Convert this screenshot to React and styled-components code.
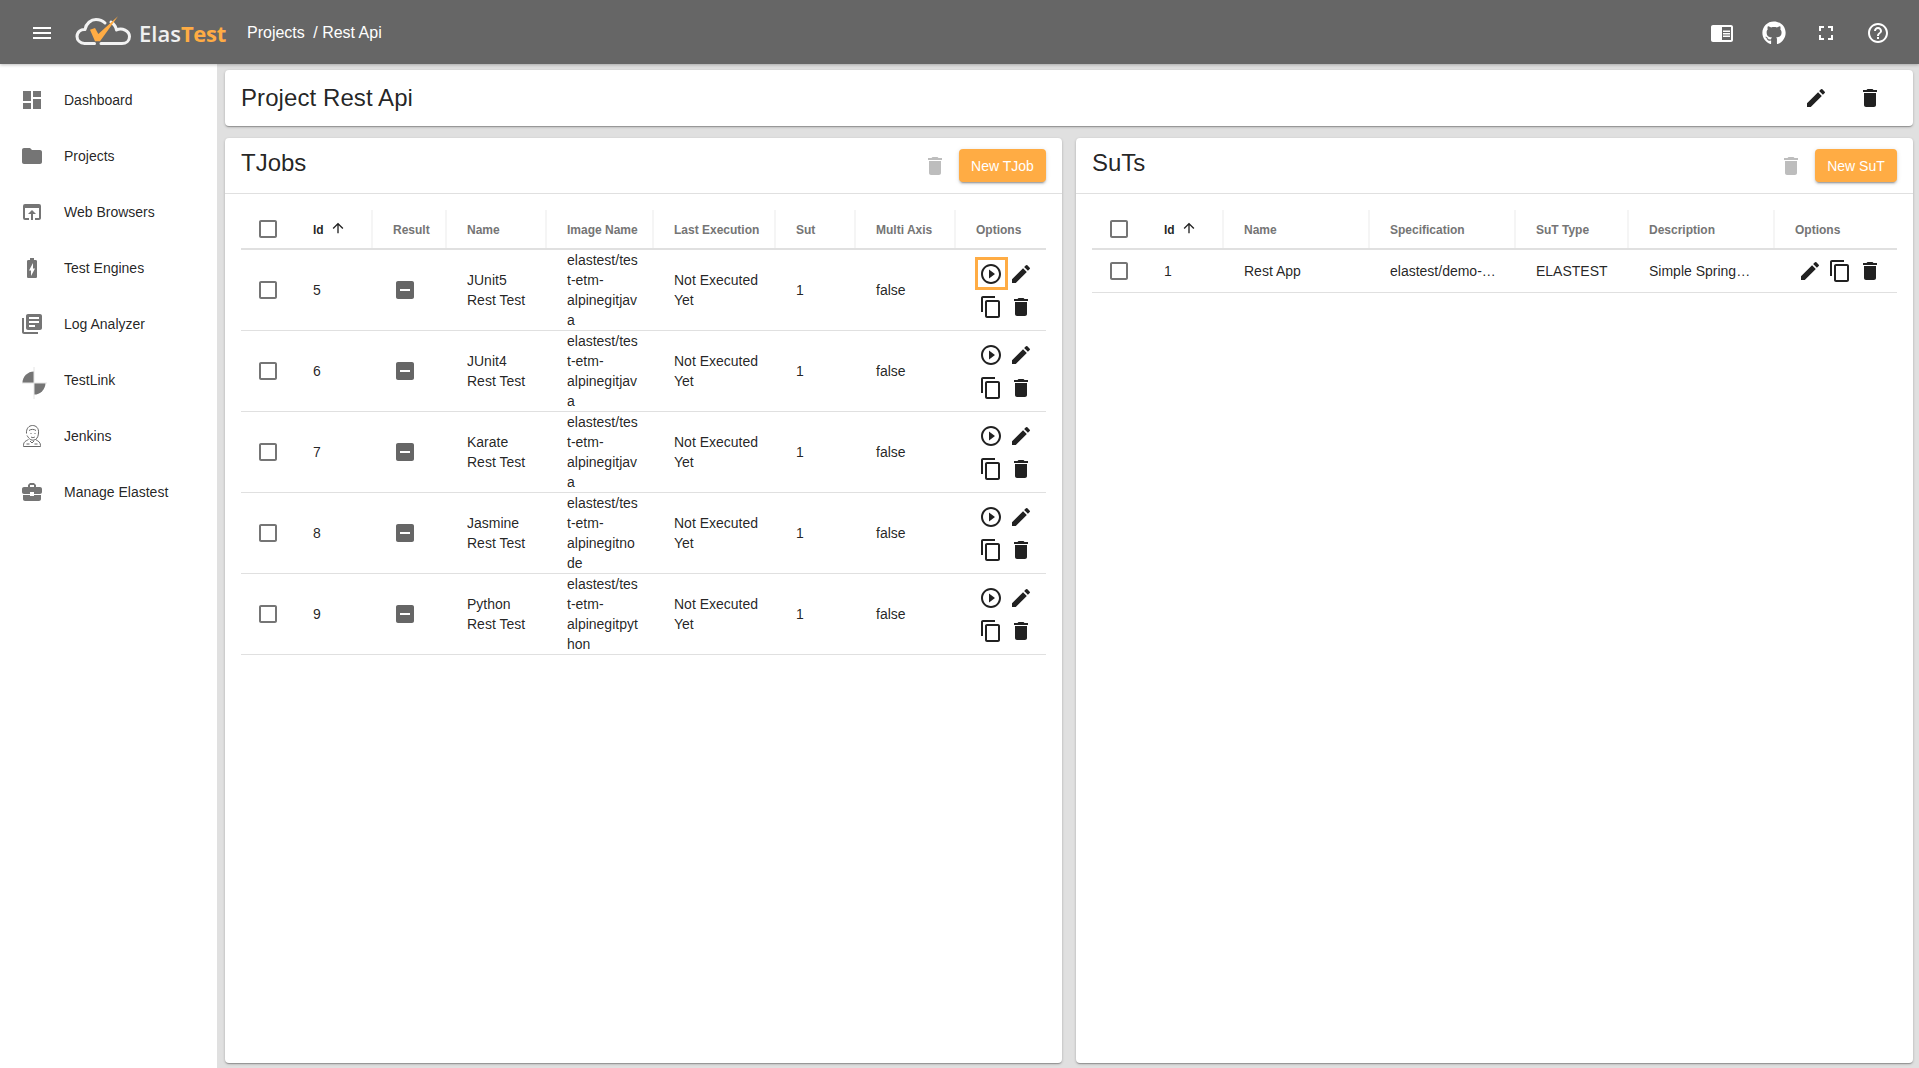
import React from "react";
import styled, { createGlobalStyle } from "styled-components";
import {
  MdMenu, MdChromeReaderMode, MdFullscreen, MdHelpOutline, MdDashboard, MdFolder, MdOpenInBrowser,
  MdBatteryChargingFull, MdLibraryBooks, MdBusinessCenter, MdEdit, MdDelete, MdContentCopy,
  MdPlayCircleOutline, MdIndeterminateCheckBox, MdCheckBoxOutlineBlank, MdArrowUpward,
} from "react-icons/md";
import { FaGithub } from "react-icons/fa";

const Global = createGlobalStyle`
  html, body { margin: 0; padding: 0; height: 100%; overflow: hidden; }
  body { font-family: "Liberation Sans", Arial, sans-serif; color: rgba(0,0,0,.87); background: #e0e0e0; }
  #root { height: 100%; }
  * { box-sizing: border-box; }
`;

const Page = styled.div`
  display: flex; flex-direction: column; height: 1068px; width: 1919px;
`;
const TopBar = styled.header`
  flex: none; height: 64px; background: #666; display: flex; align-items: center;
  padding: 0 15px 0 30px; color: #fff; position: relative; z-index: 2;
  box-shadow: 0 1px 3px rgba(0,0,0,.25);
`;
const MenuIcon = styled(MdMenu)`
  font-size: 24px; margin-right: 21px; flex: none; margin-top: 2px;
`;
const LogoMark = styled.svg`
  width: 57px; height: 36px; flex: none; margin-right: 7px;
`;
const LogoText = styled.span`
  font-family: "Open Sans", sans-serif; font-weight: 600; font-size: 22px;
  color: #f0f0f0; width: 108px; flex: none; margin-top: 1px;
`;
const LogoAccent = styled.span` color: #ffac44; font-weight: 700; letter-spacing: -.3px; `;
const Crumb = styled.span`
  font-size: 16px; margin-right: 4px; margin-top: 1px;
`;
const Spacer = styled.div` flex: 1; `;
const TopAction = styled.div`
  width: 52px; height: 52px; display: flex; align-items: center; justify-content: center;
  font-size: 24px; margin-top: 2px;
`;
const Body = styled.div` flex: 1; display: flex; min-height: 0; `;
const Sidebar = styled.nav`
  flex: none; width: 217px; background: #fff; padding-top: 8px;
`;
const NavItem = styled.div`
  height: 56px; display: flex; align-items: center; padding-left: 20px; gap: 20px; font-size: 14px;
  color: rgba(0,0,0,.87);
  svg { font-size: 24px; color: #757575; flex: none; }
`;
const Main = styled.main`
  flex: 1; min-width: 0; display: flex; flex-direction: column; gap: 12px; padding: 6px 6px 5px 8px;
`;
const Card = styled.section`
  background: #fff; border-radius: 4px;
  box-shadow: 0 1px 3px rgba(0,0,0,.2), 0 1px 1px rgba(0,0,0,.14), 0 2px 1px -1px rgba(0,0,0,.12);
`;
const ProjectCard = styled(Card)`
  flex: none; height: 56px; display: flex; align-items: center; justify-content: space-between;
  padding: 0 31px 0 16px;
`;
const ProjectTitle = styled.h1`
  margin: 0; font-size: 24px; font-weight: 400; letter-spacing: .08px;
`;
const ProjectActions = styled.div`
  display: flex; gap: 30px; font-size: 24px; color: #212121; svg { display: block; }
`;
const Panels = styled.div`
  flex: 1; min-height: 0; display: grid; grid-template-columns: 837px 837px; gap: 14px;
`;
const Panel = styled(Card)` display: flex; flex-direction: column; min-height: 0; `;
const PanelHead = styled.div`
  flex: none; height: 56px; border-bottom: 1px solid #e0e0e0; display: flex; align-items: center;
  padding: 0 16px; 
`;
const PanelTitle = styled.h2`
  margin: 0 0 6px; font-size: 24px; font-weight: 400; flex: 1;
`;
const MutedTrash = styled(MdDelete)`
  font-size: 24px; color: #bdbdbd; margin-right: 12px; margin-top: 1px;
`;
const NewButton = styled.button`
  border: 0; background: #ffac44; color: #fff; font: 400 14px "Liberation Sans", Arial, sans-serif; height: 33px;
  padding: 0; width: ${p => p.$width}px; border-radius: 4px;
  box-shadow: 0 3px 1px -2px rgba(0,0,0,.2), 0 2px 2px rgba(0,0,0,.14), 0 1px 5px rgba(0,0,0,.12);
`;
const Table = styled.div` padding: 16px 16px 0; font-size: 14px; `;
const Row = styled.div`
  display: grid; grid-template-columns: ${p => p.$cols}; height: ${p => p.$height}px;
  border-bottom: 1px solid #e0e0e0; align-items: center;
`;
const HeadRow = styled(Row)` border-bottom: 2px solid #e0e0e0; align-items: stretch; `;
const HeadCell = styled.div`
  padding: 1px 0 0 ${p => p.$active ? 19 : 20}px; font-size: 12px; font-weight: 700; display: flex; align-items: center; gap: 6px;
  color: ${p => p.$active ? "rgba(0,0,0,.87)" : "#757575"};
  border-right: ${p => p.$line ? "2px solid #f5f5f5" : "0"};
  svg { font-size: 16px; color: #212121; margin-top: -3px; }
`;
const CheckCell = styled.div`
  display: flex; align-items: center; padding-left: 15px;
  svg { font-size: 24px; color: #757575; display: block; }
`;
const Cell = styled.div`
  padding: 0 8px 0 20px; line-height: 20px; overflow-wrap: anywhere;
`;
const IdCell = styled(Cell)` padding-left: 19px; `;
const ImageCell = styled(Cell)` padding-right: 15px; `;
const Truncated = styled(Cell)`
  padding-right: 18px; white-space: nowrap; overflow: hidden; text-overflow: ellipsis;
`;
const ResultCell = styled.div`
  display: flex; padding-left: 20px;
  svg { font-size: 24px; color: #666; display: block; }
`;
const OptionGrid = styled.div`
  display: grid; grid-template-columns: 30px 30px; grid-auto-rows: 33px; padding-left: 20px;
  font-size: 24px; color: #212121;
`;
const OptionInline = styled.div`
  display: flex; padding-left: 20px; font-size: 24px; color: #212121;
`;
const OptionButton = styled.div`
  width: 30px; height: 33px; display: flex; align-items: center; justify-content: center;
  svg { display: block; }
`;
const FocusRing = styled.div`
  width: 27px; height: 27px; outline: 3px solid #ffac44; display: flex; align-items: center; justify-content: center;
`;
const TestLinkSvg = styled.svg`
  width: 26px; height: 32px; margin: 6px -4px 0 2px;
`;

const TestLinkIcon = () => (
  <TestLinkSvg viewBox="0 0 26 32">
    <path d="M12 4.500 A11.500 11.500 0 0 0 .5 16 L12 16 Z" fill="#757575" />
    <path d="M12 16 L23.500 16 A11.500 11.500 0 0 1 12 27.500 Z" fill="#757575" />
    <path d="M12 0 V32 M0 16 H25" stroke="#e4e4e4" strokeWidth="1" />
  </TestLinkSvg>
);
const JenkinsIcon = () => (
  <svg width="24" height="24" viewBox="0 0 24 24" fill="none" stroke="#666" strokeWidth="1">
    <path d="M6.5 9.5C6 4.5 9 1.5 12.5 1.5S19 4 18.5 9c-.2 2.6-.8 5-3 6.5-2.200 1.200-4.600.8-6-.8C8 13.500 7.500 12 7 11.500" />
    <path d="M9 6.500c2-1.500 5-1.500 7 0M10.500 9.500h1M14.500 9.500h1M11 13c1.200.8 2.600.8 3.800 0" />
    <path d="M8.500 15.500C6 17 3.500 17.500 3.500 21.500v1h17v-1c0-3.500-2.500-4.500-5-6" />
    <path d="M10 17l2 2 2-2M6.500 20h3M14.500 20h3" />
  </svg>
);

const nav = [
  ["Dashboard", <MdDashboard />], ["Projects", <MdFolder />], ["Web Browsers", <MdOpenInBrowser />],
  ["Test Engines", <MdBatteryChargingFull />], ["Log Analyzer", <MdLibraryBooks />], ["TestLink", <TestLinkIcon />],
  ["Jenkins", <JenkinsIcon />], ["Manage Elastest", <MdBusinessCenter />],
];
const tjobCols = "53px 79px 74px 100px 107px 122px 80px 100px 90px";
const sutCols = "53px 79px 146px 146px 113px 146px 122px";
const tjobs = [
  [5, "JUnit5 Rest Test", "elastest/test-etm-alpinegitjava"],
  [6, "JUnit4 Rest Test", "elastest/test-etm-alpinegitjava"],
  [7, "Karate Rest Test", "elastest/test-etm-alpinegitjava"],
  [8, "Jasmine Rest Test", "elastest/test-etm-alpinegitnode"],
  [9, "Python Rest Test", "elastest/test-etm-alpinegitpython"],
];

const Head = ({ cols, labels }) => (
  <HeadRow $cols={cols} $height={40}>
    <CheckCell><MdCheckBoxOutlineBlank /></CheckCell>
    <HeadCell $active $line>Id <MdArrowUpward /></HeadCell>
    {labels.map((l, i) => <HeadCell key={l} $line={i < labels.length - 1}>{l}</HeadCell>)}
  </HeadRow>
);

export default function App() {
  return (
    <Page>
      <Global />
      <TopBar>
        <MenuIcon />
        <LogoMark viewBox="0 0 57 36">
          <path d="M19.500 29.500H9.500C5 29.500 2 26 2 22.500 2 18 6 15 10 15.500 11 9.500 16 5.500 21 5.500c4 0 7 1.500 9 3.500M36 8c3 2 5 5 5.500 8 5.500-3 13 1 13 6.500 0 4.500-3.500 7-7.500 7H26"
            fill="none" stroke="#f2f2f2" strokeWidth="3" strokeLinecap="round" strokeLinejoin="round" />
          <path d="M15 15.700L20 14l3.300 6L43 2.300 25 27.300H20z" fill="#ffac44" />
        </LogoMark>
        <LogoText>Elas<LogoAccent>Test</LogoAccent></LogoText>
        <Crumb>Projects</Crumb>
        <Crumb>&nbsp;/ Rest Api</Crumb>
        <Spacer />
        <TopAction><MdChromeReaderMode /></TopAction>
        <TopAction><FaGithub /></TopAction>
        <TopAction><MdFullscreen /></TopAction>
        <TopAction><MdHelpOutline /></TopAction>
      </TopBar>
      <Body>
        <Sidebar>
          {nav.map(([label, icon]) => <NavItem key={label}>{icon}<span>{label}</span></NavItem>)}
        </Sidebar>
        <Main>
          <ProjectCard>
            <ProjectTitle>Project Rest Api</ProjectTitle>
            <ProjectActions><MdEdit /><MdDelete /></ProjectActions>
          </ProjectCard>
          <Panels>
            <Panel>
              <PanelHead>
                <PanelTitle>TJobs</PanelTitle>
                <MutedTrash />
                <NewButton $width={87}>New TJob</NewButton>
              </PanelHead>
              <Table>
                <Head cols={tjobCols} labels={["Result", "Name", "Image Name", "Last Execution", "Sut", "Multi Axis", "Options"]} />
                {tjobs.map(([id, name, image], rowIndex) => (
                  <Row key={id} $cols={tjobCols} $height={81}>
                    <CheckCell><MdCheckBoxOutlineBlank /></CheckCell>
                    <IdCell>{id}</IdCell>
                    <ResultCell><MdIndeterminateCheckBox /></ResultCell>
                    <Cell>{name}</Cell>
                    <ImageCell>{image}</ImageCell>
                    <Cell>Not Executed Yet</Cell>
                    <Cell>1</Cell>
                    <Cell>false</Cell>
                    <OptionGrid>
                      <OptionButton>
                        {rowIndex === 0 ? <FocusRing><MdPlayCircleOutline /></FocusRing> : <MdPlayCircleOutline />}
                      </OptionButton>
                      <OptionButton><MdEdit /></OptionButton>
                      <OptionButton><MdContentCopy /></OptionButton>
                      <OptionButton><MdDelete /></OptionButton>
                    </OptionGrid>
                  </Row>
                ))}
              </Table>
            </Panel>
            <Panel>
              <PanelHead>
                <PanelTitle>SuTs</PanelTitle>
                <MutedTrash />
                <NewButton $width={82}>New SuT</NewButton>
              </PanelHead>
              <Table>
                <Head cols={sutCols} labels={["Name", "Specification", "SuT Type", "Description", "Options"]} />
                <Row $cols={sutCols} $height={43}>
                  <CheckCell><MdCheckBoxOutlineBlank /></CheckCell>
                  <IdCell>1</IdCell>
                  <Cell>Rest App</Cell>
                  <Truncated>elastest/demo-rest-java-test-sut</Truncated>
                  <Cell>ELASTEST</Cell>
                  <Truncated>Simple Springboot App</Truncated>
                  <OptionInline>
                    <OptionButton><MdEdit /></OptionButton>
                    <OptionButton><MdContentCopy /></OptionButton>
                    <OptionButton><MdDelete /></OptionButton>
                  </OptionInline>
                </Row>
              </Table>
            </Panel>
          </Panels>
        </Main>
      </Body>
    </Page>
  );
}
